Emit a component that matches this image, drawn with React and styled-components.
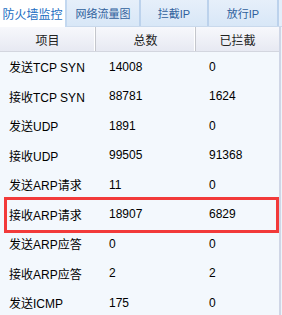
import React from "react";
import styled, { createGlobalStyle } from "styled-components";

const GlobalStyle = createGlobalStyle`
  html, body {
    margin: 0;
    padding: 0;
    background: #f3f8fd;
  }
`;

const Panel = styled.div`
  width: 282px;
  height: 315px;
  overflow: hidden;
  background: #eef4fb;
  font-family: "Liberation Sans", "Noto Sans CJK SC", sans-serif;
  font-size: 12px;
  color: #000;
`;

const TabBar = styled.div`
  display: flex;
  height: 27px;
  background: #e4eefa;
  border-bottom: 1px solid #c9d9ec;
  box-sizing: border-box;
`;

const Tab = styled.div`
  width: ${(p) => p.w}px;
  display: flex;
  align-items: center;
  justify-content: center;
  box-sizing: border-box;
  white-space: nowrap;
  font-size: ${(p) => (p.active ? 12 : 11)}px;
  color: ${(p) => (p.active ? "#1a6dc2" : "#2f5f9c")};
  background: ${(p) =>
    p.active ? "#ffffff" : "linear-gradient(#e6effa, #d8e7f7)"};
  border-right: 2px solid ${(p) => (p.active ? "#c3d8f0" : "#bcd2ec")};
  margin-bottom: ${(p) => (p.active ? "-1px" : "0")};
`;

const Table = styled.div`
  width: 279px;
  border-right: 2px solid #cfd6e6;
  background: #f3f8fd;
`;

const HeaderRow = styled.div`
  display: grid;
  grid-template-columns: 96px 100px 1fr;
  height: 24px;
  background: linear-gradient(#f7f8fc, #e7e9f2);
  border-bottom: 1px solid #d3d6df;
`;

const HeaderCell = styled.div`
  display: flex;
  align-items: center;
  justify-content: center;
  color: #222;
  border-right: ${(p) => (p.last ? "none" : "1px solid #c4c6cc")};
  box-shadow: ${(p) => (p.last ? "none" : "inset -1px 0 0 #ffffff")};
`;

const Row = styled.div`
  position: relative;
  display: grid;
  grid-template-columns: 96px 100px 1fr;
  height: 29.5px;
  align-items: center;
`;

const Cell = styled.div`
  padding-left: ${(p) => (p.first ? 9 : 13)}px;
  white-space: nowrap;
`;

const Highlight = styled.div`
  position: absolute;
  top: -3px;
  bottom: -4px;
  left: 4px;
  right: 0;
  border: 3px solid #f23a3a;
  pointer-events: none;
`;

const tabs = [
  { label: "防火墙监控", w: 67, active: true },
  { label: "网络流量图", w: 74 },
  { label: "拦截IP", w: 68 },
  { label: "放行IP", w: 70 },
];

const rows = [
  ["发送TCP SYN", "14008", "0"],
  ["接收TCP SYN", "88781", "1624"],
  ["发送UDP", "1891", "0"],
  ["接收UDP", "99505", "91368"],
  ["发送ARP请求", "11", "0"],
  ["接收ARP请求", "18907", "6829", true],
  ["发送ARP应答", "0", "0"],
  ["接收ARP应答", "2", "2"],
  ["发送ICMP", "175", "0"],
];

export default function App() {
  return (
    <Panel>
      <GlobalStyle />
      <TabBar>
        {tabs.map((t) => (
          <Tab key={t.label} w={t.w} active={t.active}>
            {t.label}
          </Tab>
        ))}
      </TabBar>
      <Table>
        <HeaderRow>
          <HeaderCell>项目</HeaderCell>
          <HeaderCell>总数</HeaderCell>
          <HeaderCell last>已拦截</HeaderCell>
        </HeaderRow>
        {rows.map(([name, total, blocked, marked]) => (
          <Row key={name}>
            <Cell first>{name}</Cell>
            <Cell>{total}</Cell>
            <Cell>{blocked}</Cell>
            {marked && <Highlight />}
          </Row>
        ))}
      </Table>
    </Panel>
  );
}
